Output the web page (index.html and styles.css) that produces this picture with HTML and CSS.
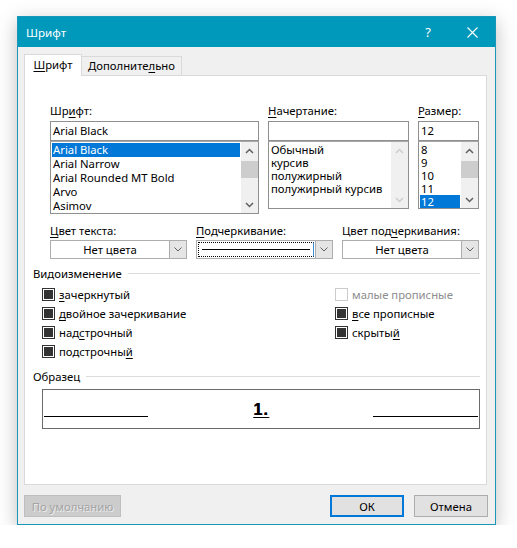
FILE: index.html
```html
<!DOCTYPE html>
<html lang="ru">
<head>
<meta charset="utf-8">
<title>Шрифт</title>
<link rel="stylesheet" href="styles.css">
</head>
<body>
<div class="window">
  <div class="titlebar">
    <span class="title">Шрифт</span>
    <span class="help">?</span>
    <svg class="close" width="11" height="11" viewBox="0 0 11 11"><path d="M0.5 0.5L10.5 10.5M10.5 0.5L0.5 10.5" stroke="#fff" stroke-width="1.1"/></svg>
  </div>

  <div class="tabs">
    <div class="tab active"><u>Ш</u>рифт</div>
    <div class="tab">Дополните<u>л</u>ьно</div>
  </div>

  <div class="panel">
    <div class="fontgrid">
      <div class="col col-font">
        <div class="label">Шр<u>и</u>фт:</div>
        <div class="input">Arial Black</div>
        <div class="list list-font">
          <div class="items rows14">
            <div class="item sel">Arial Black</div>
            <div class="item">Arial Narrow</div>
            <div class="item">Arial Rounded MT Bold</div>
            <div class="item">Arvo</div>
            <div class="item">Asimov</div>
          </div>
          <div class="scrollbar">
            <div class="arrow"><svg width="9" height="6" viewBox="0 0 9 6"><path d="M1 5L4.5 1.5L8 5" fill="none" stroke="#606060" stroke-width="1.5"/></svg></div>
            <div class="thumb"></div>
            <div class="fill"></div>
            <div class="arrow"><svg width="9" height="6" viewBox="0 0 9 6"><path d="M1 1L4.5 4.5L8 1" fill="none" stroke="#606060" stroke-width="1.5"/></svg></div>
          </div>
        </div>
      </div>

      <div class="col col-style">
        <div class="label"><u>Н</u>ачертание:</div>
        <div class="input"></div>
        <div class="list list-short">
          <div class="items rows13">
            <div class="item">Обычный</div>
            <div class="item">курсив</div>
            <div class="item">полужирный</div>
            <div class="item">полужирный курсив</div>
          </div>
          <div class="scrollbar">
            <div class="arrow"><svg width="9" height="6" viewBox="0 0 9 6"><path d="M1 5L4.5 1.5L8 5" fill="none" stroke="#cdcdcd" stroke-width="1.5"/></svg></div>
            <div class="fill"></div>
            <div class="arrow"><svg width="9" height="6" viewBox="0 0 9 6"><path d="M1 1L4.5 4.5L8 1" fill="none" stroke="#cdcdcd" stroke-width="1.5"/></svg></div>
          </div>
        </div>
      </div>

      <div class="col col-size">
        <div class="label"><u>Р</u>азмер:</div>
        <div class="input">12</div>
        <div class="list list-short">
          <div class="items rows13">
            <div class="item">8</div>
            <div class="item">9</div>
            <div class="item">10</div>
            <div class="item">11</div>
            <div class="item sel">12</div>
          </div>
          <div class="scrollbar">
            <div class="arrow"><svg width="9" height="6" viewBox="0 0 9 6"><path d="M1 5L4.5 1.5L8 5" fill="none" stroke="#606060" stroke-width="1.5"/></svg></div>
            <div class="thumb"></div>
            <div class="fill"></div>
            <div class="arrow"><svg width="9" height="6" viewBox="0 0 9 6"><path d="M1 1L4.5 4.5L8 1" fill="none" stroke="#606060" stroke-width="1.5"/></svg></div>
          </div>
        </div>
      </div>
    </div>

    <div class="combos">
      <div class="combo-field">
        <div class="label"><u>Ц</u>вет текста:</div>
        <div class="combo">
          <div class="combo-value">Нет цвета</div>
          <div class="combo-btn"><svg width="8" height="5" viewBox="0 0 8 5"><path d="M0.5 0.5L4 4L7.5 0.5" fill="none" stroke="#606060" stroke-width="1"/></svg></div>
        </div>
      </div>
      <div class="combo-field">
        <div class="label"><u>П</u>одчеркивание:</div>
        <div class="combo">
          <div class="combo-value focus"><div class="rule"></div></div>
          <div class="combo-btn"><svg width="8" height="5" viewBox="0 0 8 5"><path d="M0.5 0.5L4 4L7.5 0.5" fill="none" stroke="#606060" stroke-width="1"/></svg></div>
        </div>
      </div>
      <div class="combo-field">
        <div class="label">Цвет под<u>ч</u>еркивания:</div>
        <div class="combo">
          <div class="combo-value">Нет цвета</div>
          <div class="combo-btn"><svg width="8" height="5" viewBox="0 0 8 5"><path d="M0.5 0.5L4 4L7.5 0.5" fill="none" stroke="#606060" stroke-width="1"/></svg></div>
        </div>
      </div>
    </div>

    <div class="group-title group-effects"><span>Видоизменение</span><i></i></div>
    <div class="checks">
      <div class="check-col">
        <div class="check"><span class="box on"></span><span><u>з</u>ачеркнутый</span></div>
        <div class="check"><span class="box on"></span><span><u>д</u>войное зачеркивание</span></div>
        <div class="check"><span class="box on"></span><span>над<u>с</u>трочный</span></div>
        <div class="check"><span class="box on"></span><span>подстрочны<u>й</u></span></div>
      </div>
      <div class="check-col">
        <div class="check disabled"><span class="box"></span><span>малые прописные</span></div>
        <div class="check"><span class="box on"></span><span><u>в</u>се прописные</span></div>
        <div class="check"><span class="box on"></span><span>скрыты<u>й</u></span></div>
      </div>
    </div>

    <div class="group-title group-sample"><span>Образец</span><i></i></div>
    <div class="sample">
      <div class="sample-line left"></div>
      <div class="sample-text"><u>1.</u></div>
      <div class="sample-line right"></div>
    </div>
  </div>

  <div class="buttons">
    <div class="btn disabled">По умолчанию</div>
    <div class="spacer"></div>
    <div class="btn default">ОК</div>
    <div class="btn">Отмена</div>
  </div>
</div>
</body>
</html>
```

FILE: styles.css
```css
* { box-sizing: border-box; }

body {
  margin: 0;
  background: #fff;
  font-family: "Noto Sans", "Open Sans", sans-serif;
  font-size: 11.3px;
  color: #000;
}

u { text-decoration: underline; text-underline-offset: 2px; }

/* dialog frame */
.window {
  margin: 16px 0 0 17px;
  width: 479px;
  height: 509px;
  border: 1px solid #1a97b8;
  background: #f0f0f0;
  box-shadow: 0 5px 18px rgba(0, 0, 0, 0.26);
  display: flex;
  flex-direction: column;
}

.titlebar {
  height: 30px;
  flex: none;
  background: #0099bc;
  color: #fff;
  display: flex;
  align-items: center;
  padding: 0 17px 0 8px;
  font-size: 11.6px;
}
.title { flex: 1; }
.help { font-size: 13px; margin-right: 36px; }
.close { display: block; }

/* tab strip */
.tabs {
  margin: 7px 0 -1px 6px;
  display: flex;
  align-items: flex-end;
  position: relative;
  z-index: 1;
}
.tab {
  width: 100px;
  height: 20px;
  border: 1px solid #d9d9d9;
  border-left: none;
  background: #f0f0f0;
  display: flex;
  align-items: center;
  justify-content: center;
  padding-bottom: 1px;
}
.tab.active {
  width: 58px;
  height: 22px;
  border-left: 1px solid #d9d9d9;
  border-bottom: none;
  background: #fff;
  padding-bottom: 2px;
}

.panel {
  flex: none;
  margin-left: 6px;
  width: 463px;
  height: 410px;
  background: #fff;
  border: 1px solid #d9d9d9;
  padding: 28px 6px 0 8px;
}

.label { line-height: 14px; height: 14px; white-space: nowrap; }

/* font / style / size pickers */
.fontgrid {
  margin-left: 17px;
  display: flex;
  gap: 9px;
  align-items: flex-start;
}
.col { display: flex; flex-direction: column; }
.col .label { margin-bottom: 3px; }
.col-font { width: 209px; }
.col-style { width: 141px; }
.col-size { width: 61px; }

.input {
  height: 20px;
  border: 1px solid #8f8f8f;
  padding: 0 2px;
  line-height: 18px;
}

.list {
  border: 1px solid #8f8f8f;
  border-top-color: #a8a8a8;
  display: flex;
  overflow: hidden;
}
.list-font { height: 73px; }
.list-short { height: 68px; }

.items { flex: 1; padding: 1px; }
.item { padding-left: 1px; white-space: nowrap; }
.rows14 .item { height: 14px; line-height: 14px; }
.rows13 .item { height: 13px; line-height: 13px; }
.item.sel { background: #0078d7; color: #fff; }

.scrollbar {
  width: 17px;
  flex: none;
  background: #f0f0f0;
  display: flex;
  flex-direction: column;
}
.arrow {
  height: 17px;
  flex: none;
  display: flex;
  align-items: center;
  justify-content: center;
}
.arrow svg { display: block; }
.thumb { height: 17px; margin-top: 2px; background: #cdcdcd; flex: none; }
.fill { flex: 1; }

/* colour / underline combo boxes */
.combos {
  margin: 10px 0 0 17px;
  display: flex;
  gap: 9px;
}
.combo-field { width: 137px; }
.combo-field .label { margin-bottom: 2px; }
.combo {
  height: 19px;
  border: 1px solid #adadad;
  display: flex;
  background: #fff;
}
.combo-value {
  flex: 1;
  text-align: center;
  line-height: 17px;
}
.combo-value.focus {
  margin: 1px;
  border: 1px dotted #000;
  border-right: 1px solid #3c8fd6;
  display: flex;
  align-items: center;
  padding: 0 3px;
}
.rule { flex: 1; height: 1px; background: #000; }
.combo-btn {
  width: 17px;
  flex: none;
  background: #e5e5e5;
  border-left: 1px solid #adadad;
  display: flex;
  align-items: center;
  justify-content: center;
}
.combo-btn svg { display: block; }

/* group headings with a rule */
.group-title {
  display: flex;
  align-items: center;
  line-height: 14px;
  height: 14px;
}
.group-title i {
  flex: 1;
  height: 1px;
  background: #dcdcdc;
  margin-left: 6px;
  margin-top: -1px;
}
.group-effects { margin-top: 8px; }
.group-sample { margin-top: 9px; }

/* effects checkboxes */
.checks {
  margin: 4px 0 0 9px;
  display: flex;
}
.check-col:first-child { width: 293px; }
.check {
  height: 19px;
  display: flex;
  align-items: center;
  gap: 4px;
  white-space: nowrap;
}
.box {
  width: 13px;
  height: 13px;
  border: 1px solid #333;
  padding: 1px;
  flex: none;
  background: #fff;
}
.box.on::after {
  content: "";
  display: block;
  width: 9px;
  height: 9px;
  background: #333;
}
.check.disabled { color: #8d8d8d; }
.check.disabled .box { border-color: #cccccc; }

/* preview */
.sample {
  margin: 5px 0 0 9px;
  width: 438px;
  height: 40px;
  border: 1px solid #6b6b6b;
  display: flex;
  align-items: flex-start;
  padding: 0 1px;
}
.sample-line {
  margin-top: 26px;
  height: 1px;
  background: #000;
  flex: none;
}
.sample-line.left { width: 104px; }
.sample-line.right { width: 105px; }
.sample-text {
  flex: 1;
  text-align: center;
  font-family: "Liberation Sans", Arial, sans-serif;
  font-weight: bold;
  font-size: 16px;
  line-height: 20px;
  margin-top: 10px;
  letter-spacing: 1px;
  padding-left: 1px;
  text-shadow: 0.5px 0 0 #000;
}
.sample-text u { text-underline-offset: 2px; text-decoration-thickness: 1px; }

/* dialog buttons */
.buttons {
  margin-top: 10px;
  display: flex;
  padding: 0 7px 0 6px;
}
.spacer { flex: 1; }
.btn {
  height: 22px;
  width: 74px;
  border: 1px solid #adadad;
  background: #e1e1e1;
  display: flex;
  align-items: center;
  justify-content: center;
}
.btn.default { border: 2px solid #0078d7; margin-right: 10px; }
.btn.disabled {
  width: 97px;
  background: #cccccc;
  border-color: #bfbfbf;
  color: #a3a3a3;
  text-shadow: 1px 1px 0 #ececec;
}
```
